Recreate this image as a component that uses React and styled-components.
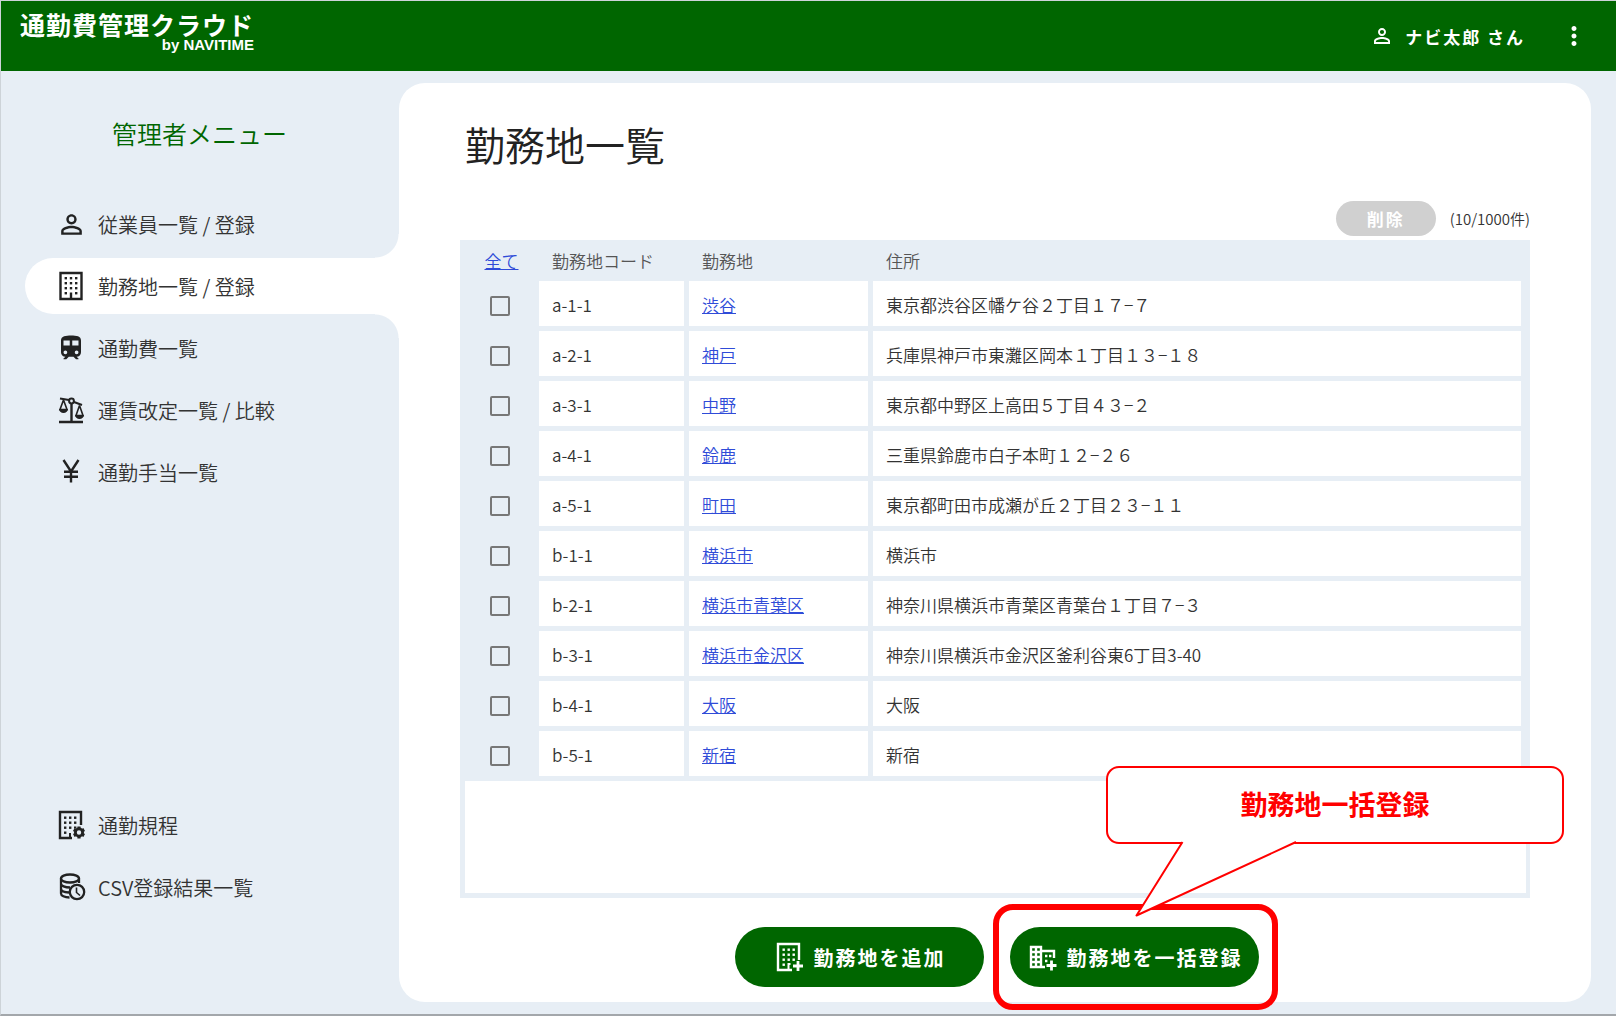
import React, { useState } from 'react';
import styled, { createGlobalStyle } from 'styled-components';
import { MdMoreVert, MdPersonOutline } from 'react-icons/md';

const places = [
  { code: 'a-1-1', name: '渋谷', address: '東京都渋谷区幡ケ谷２丁目１７−７' },
  { code: 'a-2-1', name: '神戸', address: '兵庫県神戸市東灘区岡本１丁目１３−１８' },
  { code: 'a-3-1', name: '中野', address: '東京都中野区上高田５丁目４３−２' },
  { code: 'a-4-1', name: '鈴鹿', address: '三重県鈴鹿市白子本町１２−２６' },
  { code: 'a-5-1', name: '町田', address: '東京都町田市成瀬が丘２丁目２３−１１' },
  { code: 'b-1-1', name: '横浜市', address: '横浜市' },
  { code: 'b-2-1', name: '横浜市青葉区', address: '神奈川県横浜市青葉区青葉台１丁目７−３' },
  { code: 'b-3-1', name: '横浜市金沢区', address: '神奈川県横浜市金沢区釜利谷東6丁目3-40' },
  { code: 'b-4-1', name: '大阪', address: '大阪' },
  { code: 'b-5-1', name: '新宿', address: '新宿' },
];

const Svg = ({ size = 32, children }) => (
  <svg width={size} height={size} viewBox="0 0 32 32" fill="none" stroke="currentColor" strokeWidth="2" aria-hidden="true">
    {children}
  </svg>
);

const windows = (xs, ys) =>
  ys.flatMap((y) => xs.map((x) => <rect key={`${x}-${y}`} x={x} y={y} width="2.4" height="2.4" fill="currentColor" stroke="none" />));

const PersonIcon = () => <MdPersonOutline size={31} />;

const BuildingIcon = () => (
  <Svg>
    <path d="M5.500 3h21v26h-21z" strokeWidth="2.400" />
    {windows([9.600, 14.800, 20], [7, 12, 17])}
    {windows([9.600, 20], [22])}
    <path d="M16 22.500v6" strokeWidth="2.400" />
  </Svg>
);

const TrainIcon = () => (
  <Svg size={30}>
    <path
      transform="scale(1.333)"
      fill="currentColor"
      stroke="none"
      d="M12 2C8 2 4 2.5 4 6v9.5A3.5 3.5 0 0 0 7.5 19L6 20.5V21h2.23l2-2H14l2 2h2v-.5L16.5 19a3.5 3.5 0 0 0 3.5-3.5V6c0-3.5-3.58-4-8-4M7.5 17A1.5 1.5 0 0 1 6 15.5 1.5 1.5 0 0 1 7.5 14 1.5 1.5 0 0 1 9 15.5 1.5 1.5 0 0 1 7.5 17M11 10H6V6h5v4m2 0V6h5v4h-5m3.5 7a1.5 1.5 0 0 1-1.5-1.5 1.5 1.5 0 0 1 1.5-1.5 1.5 1.5 0 0 1 1.5 1.5 1.5 1.5 0 0 1-1.5 1.5z"
    />
  </Svg>
);

const ScaleIcon = () => (
  <Svg>
    <path d="M4 28h24M16.5 10v18" strokeWidth="2.4" />
    <circle cx="16.5" cy="7" r="2.4" />
    <path d="M5 4.5l9 1.5M19 8l8 3" />
    <path d="M8.5 6L5 15.5h7L8.5 6M24.5 11.5L21 21.5h7l-3.5-10" strokeWidth="1.6" />
    <path d="M4 15h9a4.5 4 0 0 1-9 0zM20 21h9a4.5 4 0 0 1-9 0z" fill="currentColor" stroke="none" />
  </Svg>
);

const YenIcon = () => (
  <Svg>
    <path d="M8.5 4L16 15.5 23.5 4M16 15v11.5M9 15.8h14M9 20.8h14" strokeWidth="2.4" />
  </Svg>
);

const RulesIcon = () => (
  <Svg>
    <path d="M26 16V3H5v26h12" strokeWidth="2.4" />
    {windows([9, 14, 19], [7.5, 12.5])}
    {windows([9, 14], [17.5])}
    {windows([9], [22.5])}
    <path d="M19 18.5h2.4M15 29v-5" />
    <circle cx="24" cy="23.5" r="3.6" strokeWidth="2.8" />
    <path
      d="M24 17.5v2M24 27.500v2M18.800 20.500l1.700 1M27.500 25.500l1.700 1M29.200 20.500l-1.700 1M20.500 25.500l-1.700 1"
      strokeWidth="3.200"
    />
  </Svg>
);

const HistoryIcon = () => (
  <Svg>
    <g strokeWidth="2.3">
      <ellipse cx="15" cy="7.5" rx="9" ry="4" />
      <path d="M6 7.5v15c0 2.2 3.5 4 8.5 4M24 7.5v4.5M6 12.5c0 2.2 4 4 9 4M6 17.5c0 2.2 3.5 3.8 8 4" />
      <circle cx="22" cy="21" r="7.2" />
    </g>
    <path d="M21.5 16.5v5l3.5 3" strokeWidth="1.6" />
  </Svg>
);

const AddBuildingIcon = () => (
  <Svg>
    <path d="M25 19V3H4v26h14" strokeWidth="2.4" />
    {windows([8.5, 13.5, 18.5], [7.5, 12.5, 17.5])}
    {windows([8.5], [22.5])}
    <path d="M14.5 29v-6h2" />
    <path d="M24 20v10M19 25h10" strokeWidth="2.8" />
  </Svg>
);

const BulkIcon = () => (
  <Svg>
    <path d="M4 6h10v20H4zM4 11h10M4 16h10M4 21h10M9 6v20M14 10h13v7M14 26h4" strokeWidth="2.4" />
    <path d="M18 15h2.4M22 15h2.4M18 20h2.4" strokeWidth="2.4" />
    <path d="M24.5 19.5v10M19.5 24.5h10" strokeWidth="2.8" />
  </Svg>
);

const mainMenu = [
  { label: '従業員一覧 / 登録', Icon: PersonIcon },
  { label: '勤務地一覧 / 登録', Icon: BuildingIcon, active: true },
  { label: '通勤費一覧', Icon: TrainIcon },
  { label: '運賃改定一覧 / 比較', Icon: ScaleIcon },
  { label: '通勤手当一覧', Icon: YenIcon },
];

const subMenu = [
  { label: '通勤規程', Icon: RulesIcon },
  { label: 'CSV登録結果一覧', Icon: HistoryIcon },
];

const Menu = ({ items }) => (
  <MenuList>
    {items.map(({ label, Icon, active }) => (
      <li key={label}>
        <MenuLink href="#" $active={active} aria-current={active ? 'page' : undefined}>
          <MenuIcon>
            <Icon />
          </MenuIcon>
          {label}
        </MenuLink>
      </li>
    ))}
  </MenuList>
);

const PlaceTable = () => {
  const [checked, setChecked] = useState([]);

  const toggle = (code) => {
    setChecked((prev) => (prev.includes(code) ? prev.filter((c) => c !== code) : [...prev, code]));
  };

  const toggleAll = (e) => {
    e.preventDefault();
    setChecked((prev) => (prev.length === places.length ? [] : places.map((p) => p.code)));
  };

  return (
    <TableFrame>
      <Table>
        <thead>
          <tr>
            <Th $width="69px" $center>
              <Link href="#" onClick={toggleAll}>
                全て
              </Link>
            </Th>
            <Th $width="145px">勤務地コード</Th>
            <Th $width="179px">勤務地</Th>
            <Th>住所</Th>
          </tr>
        </thead>
        <tbody>
          {places.map(({ code, name, address }) => (
            <tr key={code}>
              <CheckCell>
                <Checkbox aria-label={code} checked={checked.includes(code)} onChange={() => toggle(code)} />
              </CheckCell>
              <Td>{code}</Td>
              <Td>
                <Link href="#">{name}</Link>
              </Td>
              <Td>{address}</Td>
            </tr>
          ))}
        </tbody>
      </Table>
      <TableRest />
    </TableFrame>
  );
};

const App = () => {
  return (
    <>
      <GlobalStyle />
      <Shell>
        <Header>
          <Logo>
            <strong>通勤費管理クラウド</strong>
            <small>by NAVITIME</small>
          </Logo>
          <User>
            <MdPersonOutline size={24} />
            <span>ナビ太郎 さん</span>
            <MoreButton type="button" aria-label="メニュー">
              <MdMoreVert size={30} />
            </MoreButton>
          </User>
        </Header>
        <Body>
          <Sidebar>
            <SidebarTitle>管理者メニュー</SidebarTitle>
            <Menu items={mainMenu} />
            <Menu items={subMenu} />
          </Sidebar>
          <Panel>
            <Title>勤務地一覧</Title>
            <Toolbar>
              <DeleteButton type="button" disabled>
                削除
              </DeleteButton>
              <span>(10/1000件)</span>
            </Toolbar>
            <PlaceTable />
            <Actions>
              <ActionButton type="button">
                <AddBuildingIcon />
                勤務地を追加
              </ActionButton>
              <Highlight>
                <ActionButton type="button">
                  <BulkIcon />
                  勤務地を一括登録
                </ActionButton>
                <Callout>
                  勤務地一括登録
                  <svg width="120" height="76" viewBox="0 0 120 76" aria-hidden="true">
                    <path d="M47 0v2L1.5 74.5 160 2V0z" fill="#fff" />
                    <path d="M47.5 1L1.5 74.5 161 1" fill="none" stroke="#f00" strokeWidth="2" strokeLinejoin="round" />
                  </svg>
                </Callout>
              </Highlight>
            </Actions>
          </Panel>
        </Body>
      </Shell>
    </>
  );
};

const GlobalStyle = createGlobalStyle`
  body {
    margin: 0;
    background: #fff;
    color: #333;
    font-family: 'Noto Sans CJK JP', sans-serif;
  }
  * {
    box-sizing: border-box;
  }
  button, input {
    font-family: inherit;
  }
`;

const Shell = styled.div`
  display: flex;
  flex-direction: column;
  min-height: calc(100vh - 3px);
  margin-right: 3px;
  border: solid #cdd3d8;
  border-width: 1px 0 2px 1px;
  border-bottom-color: #a3a7ab;
  background: #e7eef5;
`;

const Header = styled.header`
  display: flex;
  justify-content: space-between;
  align-items: center;
  height: 70px;
  padding: 0 27px 0 19px;
  background: #006600;
  color: #fff;
`;

const Logo = styled.div`
  display: grid;
  align-self: flex-start;
  padding-top: 10px;
  strong {
    font-size: 25px;
    line-height: 26px;
    font-weight: 700;
    letter-spacing: 1px;
  }
  small {
    font: bold 15px/16px 'Liberation Sans', Arial, sans-serif;
    text-align: right;
  }
`;

const User = styled.div`
  display: flex;
  align-items: center;
  font-size: 17px;
  font-weight: 700;
  letter-spacing: 2px;
  span {
    margin: 0 34px 0 11px;
  }
`;

const MoreButton = styled.button`
  display: flex;
  padding: 0;
  border: 0;
  background: none;
  color: inherit;
  cursor: pointer;
`;

const Body = styled.div`
  display: flex;
  flex: 1;
  padding: 12px 25px 12px 0;
`;

const Sidebar = styled.nav`
  display: flex;
  flex-direction: column;
  width: 398px;
  flex-shrink: 0;
  padding: 30px 0 87px 24px;
`;

const SidebarTitle = styled.h2`
  margin: 0 25px 43px 0;
  color: #006600;
  font-size: 25px;
  line-height: 40px;
  font-weight: 350;
  text-align: center;
`;

const MenuList = styled.ul`
  display: grid;
  gap: 6px;
  margin: 0;
  padding: 0;
  list-style: none;
  & + & {
    margin-top: auto;
  }
`;

const MenuLink = styled.a`
  position: relative;
  display: flex;
  align-items: center;
  gap: 11px;
  height: 56px;
  padding-left: 30px;
  border-radius: 28px 0 0 28px;
  background: ${({ $active }) => ($active ? '#fff' : 'none')};
  color: #333;
  font-size: 20px;
  font-weight: 350;
  text-decoration: none;

  /* inverted corners that melt the active item into the panel */
  &::before,
  &::after {
    content: ${({ $active }) => ($active ? "''" : 'none')};
    position: absolute;
    right: 0;
    width: 24px;
    height: 24px;
  }
  &::before {
    bottom: 100%;
    background: radial-gradient(circle at 0 0, transparent 23px, #fff 24px);
  }
  &::after {
    top: 100%;
    background: radial-gradient(circle at 0 100%, transparent 23px, #fff 24px);
  }
`;

const MenuIcon = styled.span`
  display: flex;
  justify-content: center;
  width: 32px;
  color: #222;
`;

const Panel = styled.main`
  flex: 1;
  min-width: 0;
  padding: 32px 61px 15px;
  border-radius: 26px;
  background: #fff;
`;

const Title = styled.h1`
  margin: 0 0 28px 5px;
  color: #222;
  font-size: 40px;
  line-height: 58px;
  font-weight: 350;
`;

const Toolbar = styled.div`
  display: flex;
  justify-content: flex-end;
  align-items: center;
  gap: 14px;
  margin-bottom: 4px;
  font-size: 15px;
  font-weight: 350;
`;

const DeleteButton = styled.button`
  width: 100px;
  height: 35px;
  padding: 0;
  border: 0;
  border-radius: 18px;
  background: #d0d0d0;
  color: #fff;
  font-size: 17px;
  font-weight: 700;
  letter-spacing: 2px;
`;

const TableFrame = styled.div`
  padding: 0 4px 5px 0;
  background: #e7eef5;
`;

const Table = styled.table`
  width: 100%;
  border-spacing: 5px;
  table-layout: fixed;
  font-size: 17px;
  line-height: 25px;
  font-weight: 350;
`;

const Th = styled.th`
  width: ${({ $width }) => $width || 'auto'};
  height: 31px;
  padding: 2px 0 2px ${({ $center }) => ($center ? '4px' : '13px')};
  color: #555;
  font-weight: 350;
  text-align: ${({ $center }) => ($center ? 'center' : 'left')};
`;

const Td = styled.td`
  height: 45px;
  padding: 2px 0 0 13px;
  background: #fff;
`;

const CheckCell = styled.td`
  padding: 0;
  text-align: center;
`;

const Checkbox = styled.input.attrs({ type: 'checkbox' })`
  appearance: none;
  display: inline-block;
  width: 20px;
  height: 20px;
  margin: 0;
  border: 2px solid #777;
  border-radius: 2px;
  vertical-align: middle;
  &:checked {
    background: #006600;
  }
`;

const Link = styled.a`
  color: #2f4bd8;
  text-decoration: underline;
`;

const TableRest = styled.div`
  height: 112px;
  margin-left: 5px;
  background: #fff;
`;

const Actions = styled.div`
  display: flex;
  justify-content: center;
  gap: 26px;
  margin-top: 29px;
  padding-left: 4px;
`;

const ActionButton = styled.button`
  display: flex;
  justify-content: center;
  align-items: center;
  gap: 8px;
  width: 249px;
  height: 60px;
  padding: 0;
  border: 0;
  border-radius: 30px;
  background: #006600;
  color: #fff;
  font-size: 20px;
  font-weight: 700;
  letter-spacing: 2px;
  cursor: pointer;
`;

const Highlight = styled.div`
  position: relative;
  &::before {
    content: '';
    position: absolute;
    inset: -23px -19px -23px -17px;
    border: 6px solid #f00;
    border-radius: 20px;
    pointer-events: none;
  }
`;

const Callout = styled.div`
  position: absolute;
  bottom: 143px;
  left: 96px;
  width: 458px;
  padding: 18px 0 20px;
  border: 2px solid #f00;
  border-radius: 13px;
  background: #fff;
  color: #f00;
  font-size: 27px;
  line-height: 36px;
  font-weight: 700;
  text-align: center;
  svg {
    position: absolute;
    top: calc(100% - 1px);
    left: 27px;
    overflow: visible;
  }
`;

export default App;
